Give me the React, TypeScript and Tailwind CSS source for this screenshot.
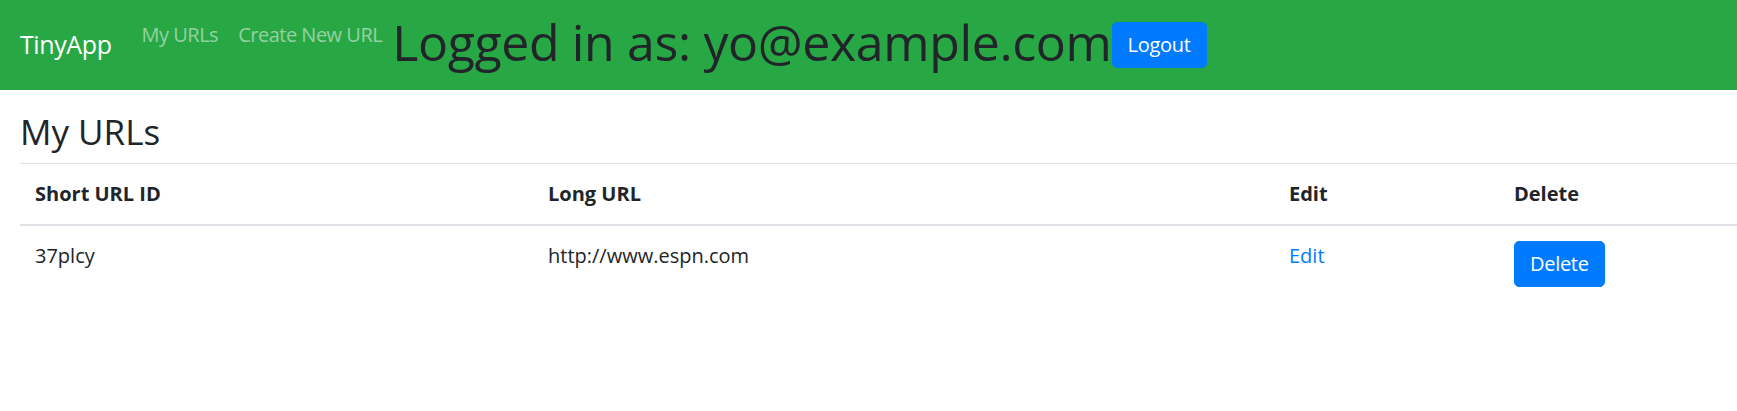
const urls = [{ id: '37plcy', longURL: 'http://www.espn.com' }];

export default function App() {
  return (
    <div className="min-h-screen bg-white text-[#212529] text-[20px] leading-[30px] font-['Open_Sans',sans-serif]">
      <nav className="flex items-center bg-[#28a745] px-[20px] py-[10px]">
        <a href="#" className="mr-[20px] py-[6px] text-[25px] leading-[37.5px] tracking-[-0.4px] text-white">
          TinyApp
        </a>
        <div className="flex self-start tracking-[-0.5px]">
          <a href="#" className="px-[10px] py-[10px] text-white/50">
            My URLs
          </a>
          <a href="#" className="px-[10px] py-[10px] text-white/50">
            Create New URL
          </a>
        </div>
        <h1 className="mt-[2px] mb-[8px] text-[50px] leading-[60px] tracking-[-0.35px] font-medium">
          Logged in as: yo@example.com
        </h1>
        <button className="rounded-[5px] border border-[#007bff] bg-[#007bff] px-[15px] py-[7px] tracking-[-0.3px] text-white">
          Logout
        </button>
      </nav>

      <main className="pl-[20px] pt-[21px]">
        <h2 className="mb-[10px] text-[35px] leading-[42px] font-medium">My URLs</h2>
        <table className="w-full border-collapse text-left">
          <thead>
            <tr>
              <th className="w-[513px] border-t border-b-2 border-[#dee2e6] p-[15px] align-bottom font-bold">Short URL ID</th>
              <th className="w-[741px] border-t border-b-2 border-[#dee2e6] p-[15px] align-bottom font-bold">Long URL</th>
              <th className="w-[225px] border-t border-b-2 border-[#dee2e6] p-[15px] align-bottom font-bold">Edit</th>
              <th className="border-t border-b-2 border-[#dee2e6] p-[15px] align-bottom font-bold">Delete</th>
            </tr>
          </thead>
          <tbody>
            {urls.map((url) => (
              <tr key={url.id}>
                <td className="border-t border-[#dee2e6] p-[15px] align-top">{url.id}</td>
                <td className="border-t border-[#dee2e6] p-[15px] align-top">{url.longURL}</td>
                <td className="border-t border-[#dee2e6] p-[15px] align-top">
                  <a href="#" className="text-[#007bff]">Edit</a>
                </td>
                <td className="border-t border-[#dee2e6] p-[15px] align-top">
                  <button className="rounded-[5px] border border-[#007bff] bg-[#007bff] px-[15px] py-[7px] tracking-[-0.3px] text-white">
                    Delete
                  </button>
                </td>
              </tr>
            ))}
          </tbody>
        </table>
      </main>
    </div>
  );
}
